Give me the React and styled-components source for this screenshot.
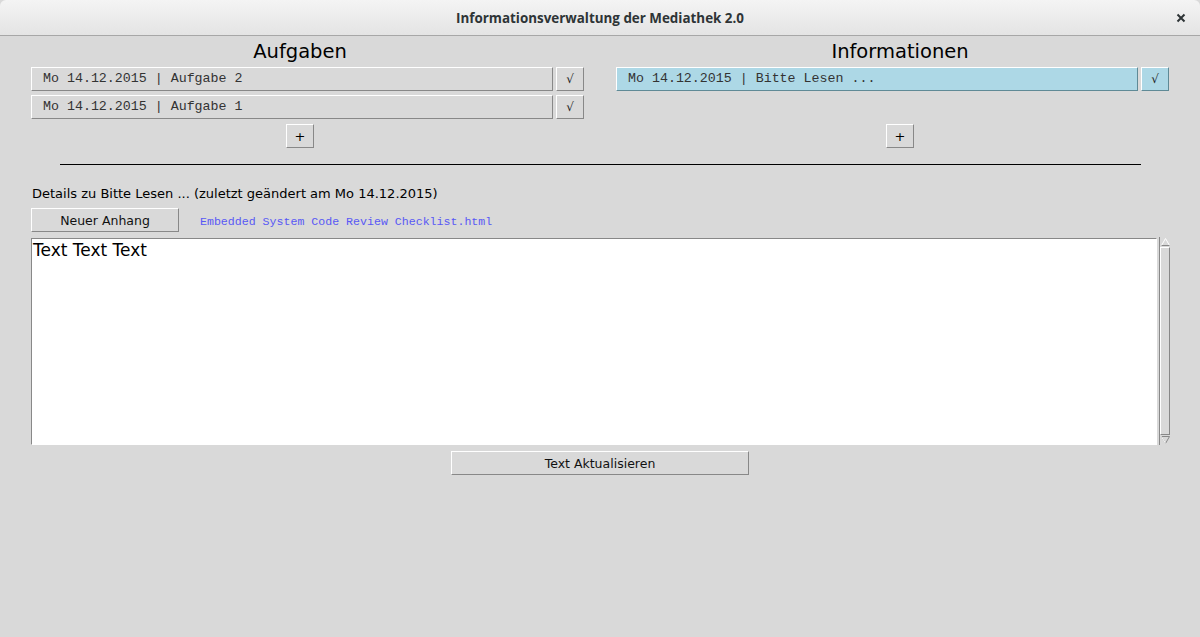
import React from 'react';
import styled, { createGlobalStyle } from 'styled-components';

const GlobalStyle = createGlobalStyle`
  html, body {
    margin: 0;
    padding: 0;
    background: #d9d9d9;
  }
`;

const aufgaben = [
  { id: 2, label: 'Mo 14.12.2015 | Aufgabe 2' },
  { id: 1, label: 'Mo 14.12.2015 | Aufgabe 1' },
];

const informationen = [
  { id: 1, label: 'Mo 14.12.2015 | Bitte Lesen ...', active: true },
];

const App = () => {
  return (
    <Window>
      <GlobalStyle />
      <TitleBar>
        <Title>Informationsverwaltung der Mediathek 2.0</Title>
        <Close>
          <svg width="10" height="10" viewBox="0 0 10 10">
            <path d="M1.5 1.5 L8.5 8.5 M8.5 1.5 L1.5 8.5" stroke="#2e3436" strokeWidth="2" />
          </svg>
        </Close>
      </TitleBar>

      <Body>
        <Columns>
          <Column>
            <Heading>Aufgaben</Heading>
            <List $pad={31}>
              {aufgaben.map((item) => (
                <Row key={item.id}>
                  <Entry>{item.label}</Entry>
                  <CheckButton>√</CheckButton>
                </Row>
              ))}
            </List>
            <PlusButton>+</PlusButton>
          </Column>
          <Column>
            <Heading>Informationen</Heading>
            <List $pad={16}>
              {informationen.map((item) => (
                <Row key={item.id}>
                  <Entry $active={item.active}>{item.label}</Entry>
                  <CheckButton $active={item.active}>√</CheckButton>
                </Row>
              ))}
              <Row />
            </List>
            <PlusButton>+</PlusButton>
          </Column>
        </Columns>

        <Separator />

        <Details>Details zu Bitte Lesen ... (zuletzt geändert am Mo 14.12.2015)</Details>

        <AttachRow>
          <Button $width={148}>Neuer Anhang</Button>
          <AttachLink>Embedded System Code Review Checklist.html</AttachLink>
        </AttachRow>

        <EditorRow>
          <TextBox>Text Text Text</TextBox>
          <Scrollbar>
            <Arrow>
              <svg width="9" height="8" viewBox="0 0 9 8">
                <path d="M4.5 0.5 L8.5 7.5 L0.5 7.5 Z" fill="#d9d9d9" stroke="#fff" />
                <path d="M8.5 7.5 L0.5 7.5" stroke="#888" />
              </svg>
            </Arrow>
            <Trough />
            <Arrow>
              <svg width="9" height="8" viewBox="0 0 9 8">
                <path d="M0.5 0.5 L8.5 0.5 L4.5 7.5 Z" fill="#d9d9d9" stroke="#888" />
                <path d="M0.5 0.5 L4.5 7.5" stroke="#fff" />
              </svg>
            </Arrow>
          </Scrollbar>
        </EditorRow>

        <UpdateRow>
          <Button $width={298}>Text Aktualisieren</Button>
        </UpdateRow>
      </Body>
    </Window>
  );
};

const Window = styled.div`
  width: 1200px;
  height: 637px;
  background: #d9d9d9;
  font-family: "DejaVu Sans", sans-serif;
  color: #000;
  overflow: hidden;
`;

const TitleBar = styled.div`
  height: 35px;
  border-bottom: 1px solid #a7a7a7;
  background: linear-gradient(#f4f4f4, #e4e4e4);
  border-radius: 6px 6px 0 0;
  display: flex;
  align-items: center;
  justify-content: center;
  position: relative;
`;

const Title = styled.div`
  font-family: "Open Sans", "DejaVu Sans", sans-serif;
  font-weight: 700;
  font-size: 13.4px;
  color: #2e3436;
  margin-top: 1px;
`;

const Close = styled.div`
  position: absolute;
  right: 14px;
  top: 13px;
  width: 10px;
  height: 10px;
  display: flex;
`;

const Body = styled.div`
  display: flex;
  flex-direction: column;
`;

const Columns = styled.div`
  display: grid;
  grid-template-columns: 600px 600px;
`;

const Column = styled.div`
  display: flex;
  flex-direction: column;
  align-items: center;
`;

const Heading = styled.div`
  font-size: 19.5px;
  height: 29px;
  line-height: 29px;
  margin-top: 1px;
  text-align: center;
`;

const List = styled.div`
  display: flex;
  flex-direction: column;
  gap: 4px;
  align-self: flex-start;
  margin-top: 1px;
  padding-left: ${(p) => p.$pad}px;
`;

const Row = styled.div`
  display: flex;
  gap: 3px;
  height: 24px;
`;

const raised = `
  border-style: solid;
  border-width: 1px;
  border-color: #fff #888 #888 #fff;
  box-sizing: border-box;
`;

const Entry = styled.div`
  ${raised}
  width: 522px;
  height: 24px;
  background: ${(p) => (p.$active ? '#add8e6' : '#d9d9d9')};
  border-color: ${(p) => (p.$active ? '#fff #5f8a96 #5f8a96 #fff' : '#fff #888 #888 #fff')};
  font-family: "Liberation Mono", "Courier New", monospace;
  font-size: 13.3px;
  color: #333;
  line-height: 22px;
  padding-left: 11px;
  white-space: pre;
`;

const CheckButton = styled.div`
  ${raised}
  width: 28px;
  height: 24px;
  background: ${(p) => (p.$active ? '#add8e6' : '#d9d9d9')};
  border-color: ${(p) => (p.$active ? '#fff #5f8a96 #5f8a96 #fff' : '#fff #888 #888 #fff')};
  font-size: 12px;
  color: #222;
  display: flex;
  align-items: center;
  justify-content: center;
`;

const PlusButton = styled.div`
  ${raised}
  width: 28px;
  height: 24px;
  margin-top: 5px;
  font-size: 13px;
  display: flex;
  align-items: center;
  justify-content: center;
`;

const Separator = styled.div`
  margin: 16px 0 0 60px;
  width: 1081px;
  height: 1px;
  background: #000;
`;

const Details = styled.div`
  margin: 21px 0 0 32px;
  font-size: 13px;
  height: 16px;
  line-height: 16px;
`;

const AttachRow = styled.div`
  display: flex;
  align-items: center;
  gap: 21px;
  margin: 6px 0 0 31px;
`;

const Button = styled.div`
  ${raised}
  width: ${(p) => p.$width}px;
  height: 24px;
  font-size: 12.5px;
  color: #111;
  display: flex;
  align-items: center;
  justify-content: center;
`;

const AttachLink = styled.div`
  font-family: "Liberation Mono", "Courier New", monospace;
  font-size: 11.6px;
  color: #5858f5;
  margin-top: 2px;
`;

const EditorRow = styled.div`
  display: flex;
  gap: 2px;
  margin: 5px 0 0 31px;
  height: 208px;
`;

const TextBox = styled.div`
  width: 1126px;
  height: 207px;
  margin-top: 1px;
  box-sizing: border-box;
  background: #fff;
  border-style: solid;
  border-width: 1px;
  border-color: #888 #fff #fff #888;
  font-size: 17px;
  line-height: 20px;
  padding: 1px 0 0 1px;
  color: #000;
`;

const Scrollbar = styled.div`
  width: 11px;
  height: 208px;
  box-sizing: border-box;
  border-left: 1px solid #888;
  display: flex;
  flex-direction: column;
`;

const Arrow = styled.div`
  height: 10px;
  display: flex;
  align-items: center;
  justify-content: center;
`;

const Trough = styled.div`
  flex: 1;
  box-sizing: border-box;
  border-style: solid;
  border-width: 1px;
  border-color: #fff #888 #888 #fff;
`;

const UpdateRow = styled.div`
  display: flex;
  margin: 6px 0 0 451px;
`;

export default App;
